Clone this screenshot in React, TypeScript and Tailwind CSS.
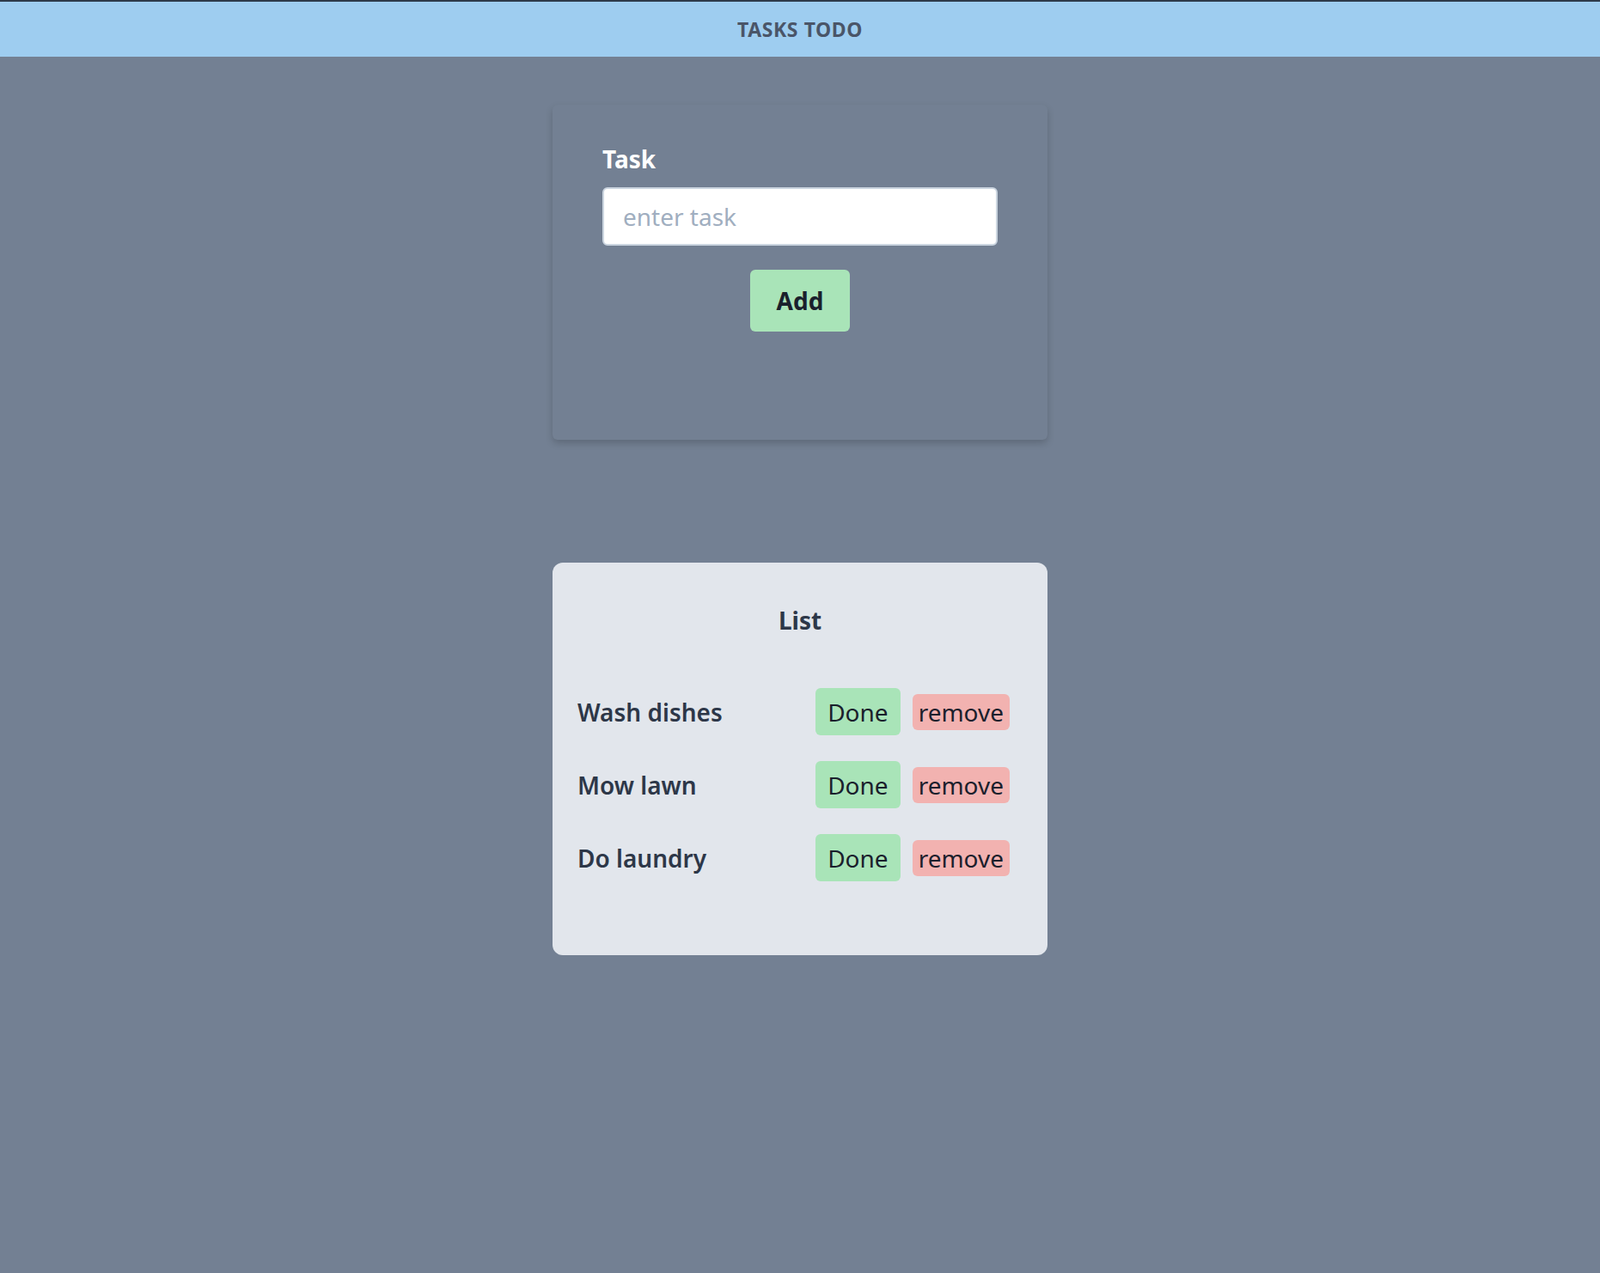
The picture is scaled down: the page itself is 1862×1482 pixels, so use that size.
const tasks = ["Wash dishes", "Mow lawn", "Do laundry"];

export default function App() {
  return (
    <div className="min-h-[1482px] bg-[#738093] font-['Inter',sans-serif]">
      <header className="h-[66px] border-t-2 border-[#2d3a4a] bg-[#9ecdf0] flex items-center justify-center">
        <h1 className="text-[23px] font-bold tracking-wide text-[#4a5568]">TASKS TODO</h1>
      </header>

      <div className="w-[576px] mx-auto mt-[56px] h-[390px] rounded-md bg-[#738093] shadow-[0_4px_8px_rgba(0,0,0,0.18)] px-[58px] pt-[42px]">
        <label className="block text-[28px] font-bold text-white mb-[12px]">Task</label>
        <input
          placeholder="enter task"
          className="w-full h-[68px] rounded-md border-2 border-[#cbd5e0] bg-white px-[22px] text-[28px] text-[#2d3748] placeholder:text-[#a0aec0] outline-none"
        />
        <div className="flex justify-center mt-[28px]">
          <button className="w-[116px] h-[72px] rounded-md bg-[#a9e4b8] text-[28px] font-bold text-[#1a202c]">Add</button>
        </div>
      </div>

      <div className="w-[576px] mx-auto mt-[143px] h-[457px] rounded-xl bg-[#e2e6ec] px-[29px] pt-[46px]">
        <h2 className="text-center text-[28px] font-bold text-[#2d3748]">List</h2>
        <div className="mt-[58px] flex flex-col gap-[30px]">
          {tasks.map((t) => (
            <div key={t} className="flex items-center">
              <span className="flex-1 text-[28px] font-semibold text-[#2d3748]">{t}</span>
              <button className="h-[55px] px-[14px] rounded-md bg-[#a9e4b8] text-[28px] text-[#1a202c]">Done</button>
              <button className="ml-[14px] mr-[15px] h-[42px] px-[7px] rounded-md bg-[#f2b2b0] text-[28px] text-[#1a202c] leading-none">remove</button>
            </div>
          ))}
        </div>
      </div>
    </div>
  );
}
